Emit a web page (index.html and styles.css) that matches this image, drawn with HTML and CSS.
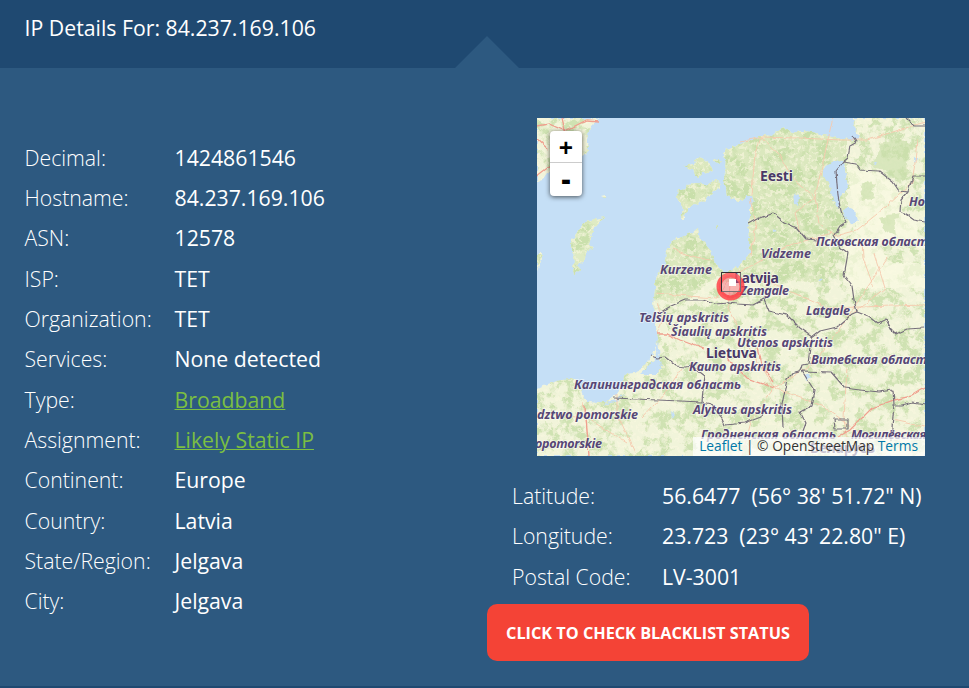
FILE: index.html
```html
<!DOCTYPE html>
<html lang="en">
<head>
<meta charset="utf-8">
<title>IP Details</title>
<link rel="stylesheet" href="styles.css">
</head>
<body>
<header class="header"><h1>IP Details For: 84.237.169.106</h1><span class="notch"></span></header>
<main class="content">
<dl class="details">
<div><dt>Decimal:</dt><dd>1424861546</dd></div>
<div><dt>Hostname:</dt><dd>84.237.169.106</dd></div>
<div><dt>ASN:</dt><dd>12578</dd></div>
<div><dt>ISP:</dt><dd>TET</dd></div>
<div><dt>Organization:</dt><dd>TET</dd></div>
<div><dt>Services:</dt><dd>None detected</dd></div>
<div><dt>Type:</dt><dd><a href="#">Broadband</a></dd></div>
<div><dt>Assignment:</dt><dd><a href="#">Likely Static IP</a></dd></div>
<div><dt>Continent:</dt><dd>Europe</dd></div>
<div><dt>Country:</dt><dd>Latvia</dd></div>
<div><dt>State/Region:</dt><dd>Jelgava</dd></div>
<div><dt>City:</dt><dd>Jelgava</dd></div>
</dl>
<section class="location">
<div class="map">
<svg class="tiles" viewBox="0 0 388 338" width="388" height="338">
<defs>
<path id="land" d="M316 0L318 12L323 18L317 22L305 21L290 18L275 14L265 13L256 15L250 12L246 9L240 13L235 18L225 17L220 20L210 23L202 27L195 29L188 32L186 38L189 42L188 50L189 57L186 62L189 70L190 78L196 80L201 84L205 82L210 78L215 78L217 82L213 90L213 100L211 105L212 120L213 135L208 142L200 149L193 154L186 154L180 148L176 140L174 133L166 124L161 117L160 111L155 115L145 119L137 121L133 127L129 135L128 146L121 155L118 160L118 172L116 188L119 196L119 210L121 220L118 232L112 242L103 252L98 255L88 256L86 262L84 270L80 276L73 281L68 285L60 285L50 284L46 276L44 270L42 264L33 261L20 263L8 267L0 271V338H388V0Z
M0 0H62L54 8L50 20L52 29L49 36L30 45L10 55L5 62L0 64Z
M35 123L43 109L49 104L58 101L69 99L62 104L57 110L54 118L52 128L58 129L50 133L45 145L40 147L42 152L37 156L36 150L38 143L35 132Z
M0 138L5 133L5 140L0 152Z
M147 48L157 46L160 39L165 40L173 46L175 53L165 55L160 60L155 51Z
M141 71L148 72L150 66L160 65L170 67L178 62L183 64L184 70L177 73L170 81L160 86L151 90L147 101L144 101L146 90L140 80Z
M177 43L181 41L184 44L179 46Z M64 78L68 77L68 80Z M179 108L181 107L181 110Z"/>
<clipPath id="landClip"><use href="#land"/></clipPath>
<filter id="coast" x="0" y="0" width="100%" height="100%"><feTurbulence type="fractalNoise" baseFrequency=".22" numOctaves="2" seed="8"/><feDisplacementMap in="SourceGraphic" scale="5" xChannelSelector="R" yChannelSelector="G"/><feGaussianBlur stdDeviation=".45"/></filter>
<filter id="rough" x="-5%" y="-5%" width="110%" height="110%"><feTurbulence type="fractalNoise" baseFrequency=".12" numOctaves="2" seed="3"/><feDisplacementMap in="SourceGraphic" scale="4" xChannelSelector="R" yChannelSelector="G"/><feGaussianBlur stdDeviation=".35"/></filter>
<filter id="forest" x="0" y="0" width="100%" height="100%" color-interpolation-filters="sRGB"><feTurbulence type="fractalNoise" baseFrequency=".075" numOctaves="5" seed="12"/><feColorMatrix values="0 0 0 0 .76  0 0 0 0 .86  0 0 0 0 .64  7 0 0 0 -3.3"/></filter>
<filter id="fields" x="0" y="0" width="100%" height="100%" color-interpolation-filters="sRGB"><feTurbulence type="fractalNoise" baseFrequency=".25" numOctaves="3" seed="5"/><feColorMatrix values="0 0 0 0 .98  0 0 0 0 .97  0 0 0 0 .88  6 0 0 0 -3"/></filter>
</defs>
<rect width="388" height="338" fill="#c5dff6"/>
<g filter="url(#coast)">
<use href="#land" fill="#f1f4da"/>
<path clip-path="url(#landClip)" fill="#dbe8be" d="M140 35H188L180 0H310V108L275 120L300 135L290 165L180 158L145 186L116 180L125 110L170 110L190 140L212 130L180 80L130 110Z"/>
<path clip-path="url(#landClip)" fill="#dfebc4" d="M32 95H70V160H32Z"/>
<g clip-path="url(#landClip)"><rect width="388" height="338" filter="url(#forest)" opacity=".72"/><rect width="388" height="338" filter="url(#fields)" opacity=".6"/></g>
<path fill="#fbfae3" opacity=".65" d="M309 42L318 52L345 55L365 73L375 75L363 85L367 96L380 102V126L340 128L355 145L388 145V170H315L307 150L308 127L319 109Z"/>
<path fill="#c8dda9" opacity=".6" d="M343 25L362 20L376 28L369 43L372 55L362 66L350 52L338 50L333 46L341 37ZM323 68L330 63L338 66L335 72L339 80L325 83ZM342 100L352 97L363 95L357 105L359 117L348 113Z"/>
<path fill="#c5dff6" d="M286 51L295 44L306 43L309 58L311 70L303 79L301 91L296 82L292 64L286 59ZM306 92L311 89L318 92L321 104L314 106L308 99ZM257 76L262 78L261 88L258 86ZM121 222L124 250L118 256L103 256L112 248L118 240ZM66 287L80 280L88 276L79 284ZM236 110L240 113L236 114ZM281 162L286 160L284 164ZM134 293L138 297L135 302ZM377 40L380 40L379 47ZM336 44L340 44L338 48ZM268 256L275 259L269 262Z"/>
</g>
<g fill="none" stroke="#f6c9ae" stroke-width=".9" filter="url(#rough)">
<path d="M203 24L225 19L260 20L305 22L330 22L388 4M224 20L218 35L216 60L215 78M224 20L242 36L255 60L278 79L296 0M278 79L282 105L298 118L320 112L350 88L375 65L378 45L380 20M278 79L258 95L263 115M213 80L219 105L214 138M193 158L218 146L250 128L295 115M325 122L326 140L337 170M193 158L235 165L290 190L388 187M193 158L180 180L150 178L120 175M193 165L191 190L215 235L237 270L215 300L205 338M237 270L285 288L310 305L325 318M237 270L278 245L310 200L350 140M120 184L125 200L120 216M46 285L50 310L52 338M80 276L80 295L98 335M0 295L50 300L90 325M145 250L128 275L105 300M310 250L307 300L312 338M355 302L388 309M337 135L348 170L310 200M136 131L155 138L176 143"/>
</g>
<g fill="none" stroke="#f0a08f" stroke-width="1.3" filter="url(#rough)">
<path d="M0 8L12 6L28 13L35 21M25 0L28 13L50 2L62 3M0 21L12 32M0 58L13 48M120 216L130 216L143 222L167 231M190 240L210 260L237 270M221 230L226 250L236 264M48 288L50 312L52 338M301 319L313 312L335 290L357 282L375 278L388 270"/>
</g>
<g fill="none" stroke="#77707c" stroke-width="1.2" stroke-linejoin="round" filter="url(#rough)">
<path d="M316 18L320 24L313 28L311 40L306 44L299 53L301 78L304 94L309 105L303 109L297 118L303 129L311 135L307 158L315 168L317 182L320 194L315 196L300 209L283 213L275 219L262 210L249 197L232 193L227 181L216 187L200 186L191 185L178 186L166 182L148 182L134 188L124 194"/>
<path d="M306 44L319 46L323 52L342 53L356 64L362 73L371 74L364 82L363 93L370 97L377 102L388 104M371 74L376 58L388 58M370 0L378 8L388 8"/>
<path d="M211 106L220 101L236 95L247 104L260 110L269 121L279 122M320 194L333 199L341 205L349 201L354 211L359 216L370 211L388 210"/>
<path d="M114 238L120 240L128 239L139 248L148 249L155 248L168 258L166 272L165 284L77 280M165 284L174 286L185 300L188 307L208 305L224 299L225 294"/>
<path d="M275 219L273 238L272 246L265 247L263 254L255 256L250 261L245 287L246 310M265 253L294 254L308 270L324 272L342 274L356 272L357 286L355 310L354 322M265 253L277 272L274 288L263 294L269 305L266 313M355 287L365 287L376 284L388 286M297 301H311V311H298Z"/>
</g>
<g class="labels">
<text x="123" y="156" textLength="52">Kurzeme</text><text x="224" y="140" textLength="50">Vidzeme</text><text x="279" y="128" textLength="119">Псковская область</text><text x="372" y="88">Новгородская</text><text x="203" y="176.500" textLength="49">Zemgale</text>
<text x="102" y="204" textLength="90">Telšių apskritis</text><text x="134" y="217.500" textLength="96">Šiaulių apskritis</text><text x="269" y="196.500" textLength="44">Latgale</text><text x="200" y="229" textLength="96">Utenos apskritis</text><text x="152" y="253" textLength="92">Kauno apskritis</text><text x="274" y="246" textLength="123">Витебская область</text><text x="37" y="271" textLength="167">Калининградская область</text><text x="0" y="301" textLength="101">dztwo pomorskie</text><text x="156" y="296" textLength="99">Alytaus apskritis</text><text x="-2" y="330" textLength="67">opomorskie</text><text x="164" y="321" textLength="135">Гродненская область</text><text x="314" y="321" textLength="129">Могилёвская область</text>
<g class="country"><text x="223" y="62.500" textLength="33">Eesti</text><text x="197" y="165" textLength="45">Latvija</text><text x="169" y="240" textLength="51">Lietuva</text><text x="273" y="335" textLength="65">Беларусь</text></g>
</g>
<circle cx="193.500" cy="168.500" r="11.500" fill="#f03" fill-opacity=".3" stroke="#ff3c43" stroke-opacity=".82" stroke-width="5"/>
<rect x="184.500" y="154.500" width="19" height="19" fill="#fff" fill-opacity=".12" stroke="#777074"/>
<path d="M184.500 173.500V154.500H203.500" fill="none" stroke="#343034"/>
<rect x="192" y="161" width="7" height="7" fill="#fff"/>
</svg>
<div class="zoom"><a href="#">+</a><a href="#">-</a></div>
<div class="credit"><a href="#">Leaflet</a> | © OpenStreetMap <a href="#">Terms</a></div>
</div>
<dl class="coords">
<div><dt>Latitude:</dt><dd>56.6477&nbsp; (56° 38' 51.72" N)</dd></div>
<div><dt>Longitude:</dt><dd>23.723&nbsp; (23° 43' 22.80" E)</dd></div>
<div><dt>Postal Code:</dt><dd>LV-3001</dd></div>
</dl>
<a class="button" href="#">CLICK TO CHECK BLACKLIST STATUS</a>
</section>
</main>
</body>
</html>
```

FILE: styles.css
```css
* { box-sizing: border-box; }
body { margin: 0; height: 688px; display: flex; flex-direction: column; overflow: hidden; background: #2d5980; color: #fff; font-family: "Open Sans", "Noto Sans", sans-serif; font-size: 21.25px; }
.header { position: relative; height: 68px; flex: none; padding: 8px 24.500px; background: #1f4971; }
h1 { margin: 0; font-size: 21.28px; font-weight: 400; line-height: 40px; }
.notch { position: absolute; left: 455px; bottom: 0; border: solid transparent; border-width: 0 32px 32px; border-bottom-color: #2d5980; }
.content { flex: 1; display: grid; grid-template-columns: 487px 1fr; border-bottom: 2px solid #1f4971; }
dl { margin: 0; }
dl div { display: flex; line-height: 40.3px; }
dt { width: 150px; flex: none; font-weight: 300; }
dd { margin: 0; white-space: nowrap; }
dd a { color: #7bbf42; text-decoration: underline; text-decoration-thickness: 1px; }
.details { padding: 69.900px 0 0 24.500px; }
.location { padding-top: 50px; }
.map { position: relative; width: 388px; height: 338px; margin-left: 50px; overflow: hidden; }
.tiles { display: block; }
.labels text { font: italic 700 12.6px "Noto Sans", sans-serif; fill: #574775; stroke: #fff; stroke-opacity: .6; stroke-width: 1.4px; paint-order: stroke; }
.labels .country text { font: 700 14px "Noto Sans", sans-serif; fill: #493866; }
.zoom { position: absolute; left: 13px; top: 13px; width: 32px; height: 65px; border-radius: 4px; background: #fff; box-shadow: 0 1px 5px rgba(0, 0, 0, .65); }
.zoom a { display: block; height: 32px; font-size: 25px; font-weight: 700; line-height: 32px; text-align: center; color: #000; text-decoration: none; }
.zoom a:first-child { border-bottom: 1px solid #ccc; }
.zoom a:last-child { font-size: 28px; font-weight: 800; line-height: 31px; }
.credit { position: absolute; right: 0; bottom: 0; padding: 0 7px 1px 6px; background: rgba(255, 255, 255, .7); color: #333; font-size: 13.75px; line-height: 18px; white-space: nowrap; }
.credit a { color: #0078a8; text-decoration: none; }
.coords { padding: 20px 0 0 25px; }
.coords div:last-child { padding-top: .3px; }
.button { display: flex; align-items: center; justify-content: center; width: 322px; height: 57px; margin-top: 6.800px; padding-top: 1px; border-radius: 10px; background: #f44336; color: #fff; font-size: 16.25px; font-weight: 700; text-decoration: none; }
```
